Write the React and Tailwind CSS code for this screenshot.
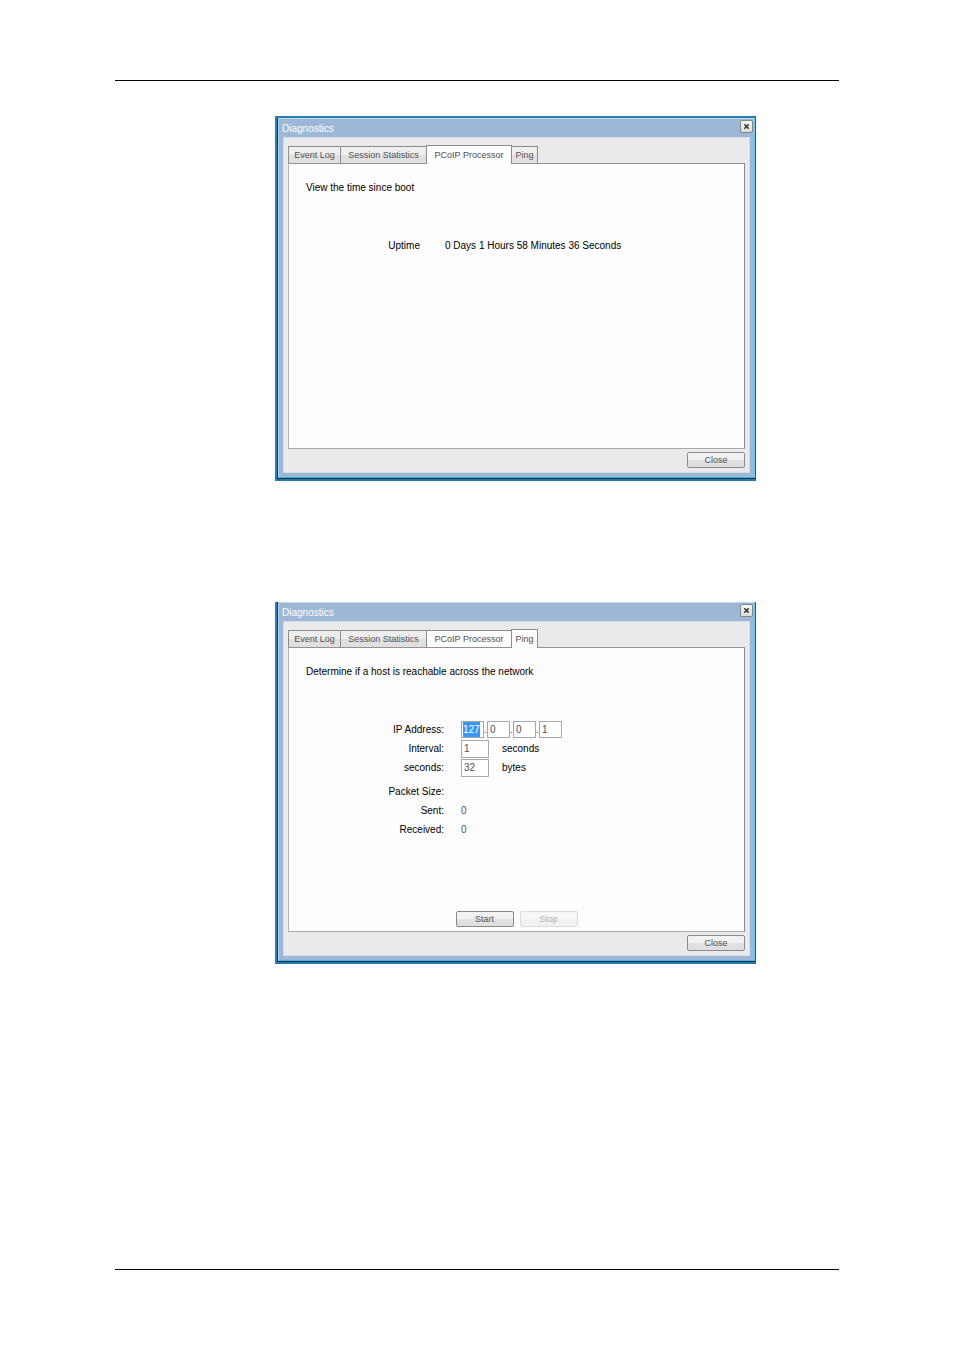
import React from 'react';

const TABS = ['Event Log', 'Session Statistics', 'PCoIP Processor', 'Ping'];
const TAB_WIDTHS = ['w-[53px]', 'w-[87px]', 'w-[86px]', 'w-[27px]'];

function Tabs({ active, plain = [] }) {
  return (
    <div role="tablist" className="flex h-[18px] items-end">
      {TABS.map((name, i) => {
        const on = name === active;
        const look = on
          ? 'relative z-10 h-[19px] bg-[#fdfdfd] border-b-0 -mb-px'
          : plain.includes(name)
            ? 'h-[17px] bg-[#fdfdfd] border-b-0'
            : 'h-[17px] bg-linear-to-b from-[#eeeeee] from-50% to-[#e0e0e0] to-50% border-b-0';
        return (
          <button
            key={name}
            type="button"
            role="tab"
            aria-selected={on}
            className={`${look} ${TAB_WIDTHS[i]} ${i ? '-ml-px' : ''} shrink-0 border border-[#8c8c8c] text-center text-[9px] leading-4 whitespace-nowrap text-[#505050]`}
          >
            {name}
          </button>
        );
      })}
    </div>
  );
}

function Button({ children, disabled }) {
  return (
    <button
      type="button"
      disabled={disabled}
      className="h-4 w-[58px] rounded-[2px] border border-[#8a8a8a] bg-linear-to-b from-[#f2f2f2] from-50% to-[#e0e0e0] to-50% text-center text-[9px] leading-[14px] text-[#505050] disabled:border-[#dcdcdc] disabled:from-[#f7f7f7] disabled:to-[#f2f2f2] disabled:text-[#b0b0b0]"
    >
      {children}
    </button>
  );
}

function Dialog({ frame, active, plain, panel, children }) {
  return (
    <section
      role="dialog"
      aria-label="Diagnostics"
      className={`${frame} mr-[83px] ml-[160px] border-r border-b-2 border-l-2 border-r-[#14688c] border-b-[#2778ad] border-l-[#2380b8]`}
    >
      <div className="border-b border-l border-[#10304c]">
        <div className="border border-t-[#c3d6ea] border-r-[#62c8ec] border-b-[#45b4dc] border-l-[#b5d4ea] bg-[#9db8d6] px-1 pb-1">
          <header className="-mx-1 flex h-[18px] items-start justify-between pr-px pl-[3px]">
            <h2 className="pt-px text-[10px] leading-[18px] text-white">Diagnostics</h2>
            <button
              type="button"
              aria-label="Close window"
              className="mt-px flex h-[13px] w-[13px] items-center justify-center rounded-[2px] border border-[#858585] bg-linear-to-b from-[#f6f6f6] to-[#dcdcdc]"
            >
              <svg width="5" height="5" viewBox="0 0 5 5" className="stroke-[#303030]" aria-hidden="true">
                <path d="M0.3 0.3 4.7 4.7M4.7 0.3 0.3 4.7" strokeWidth="1.5" />
              </svg>
            </button>
          </header>
          <div className="border border-[#d3deea] bg-[#eaeaea] px-1 pt-[7px]">
            <Tabs active={active} plain={plain} />
            <div
              role="tabpanel"
              className={`${panel} flex flex-col border border-t-[#929292] border-r-[#888888] border-b-[#aaaaaa] border-l-[#b4b4b4] bg-[#fdfdfd]`}
            >
              {children}
            </div>
            <footer className="flex h-[23px] items-start justify-end pt-[3px]">
              <Button>Close</Button>
            </footer>
          </div>
        </div>
      </div>
    </section>
  );
}

const BOX = 'border border-[#a8a8a8] bg-white px-0.5 text-[#505050] outline-none';
const LABEL = 'mr-[17px] w-[155px] text-right';

function Field({ label, id, value, unit }) {
  return (
    <div className="flex h-[19px] items-center">
      <label htmlFor={id} className={LABEL}>{label}</label>
      <input id={id} type="text" defaultValue={value} className={`${BOX} h-[18px] w-[28px]`} />
      <span className="ml-[13px]">{unit}</span>
    </div>
  );
}

function Reading({ label, value }) {
  return (
    <div className="flex h-[19px] items-center">
      <span className={LABEL}>{label}</span>
      <output className="text-[#505050]">{value}</output>
    </div>
  );
}

function IpAddress() {
  return (
    <div className="flex h-[19px] items-center">
      <label htmlFor="ip-0" className={LABEL}>IP Address:</label>
      <div className="flex items-center">
        {['127', '0', '0', '1'].map((part, i) => (
          <React.Fragment key={i}>
            {i > 0 && <span className="w-[3px] text-[#505050]">.</span>}
            <input
              id={`ip-${i}`}
              aria-label={i ? `IP Address part ${i + 1}` : undefined}
              type="text"
              defaultValue={part}
              className={
                i === 0
                  ? 'h-[17px] w-[23px] border border-[#a8a8a8] bg-[#3399ff] bg-clip-content py-0 pr-[3px] pl-px text-white outline-none'
                  : `${BOX} h-[17px] w-[23px]`
              }
            />
          </React.Fragment>
        ))}
      </div>
    </div>
  );
}

export default function App() {
  return (
    <main className="flex min-h-screen flex-col bg-white px-[115px] pt-20 pb-20 font-['Liberation_Sans',Arial,sans-serif] text-[10px] leading-4 text-black">
      <hr className="border-t border-black" />

      <Dialog
        frame="mt-[35px] border-t-2 border-t-[#2380b8]"
        active="PCoIP Processor"
        panel="min-h-[286px]"
      >
        <p className="pt-4 pl-[17px]">View the time since boot</p>
        <dl className="mt-[42px] flex">
          <dt className="mr-[25px] w-[131px] text-right">Uptime</dt>
          <dd>0 Days 1 Hours 58 Minutes 36 Seconds</dd>
        </dl>
      </Dialog>

      <Dialog
        frame="mt-[121px]"
        active="Ping"
        plain={['PCoIP Processor']}
        panel="min-h-[285px]"
      >
        <p className="pt-4 pl-[17px]">Determine if a host is reachable across the network</p>
        <form className="mt-10 flex grow flex-col" onSubmit={(e) => e.preventDefault()}>
          <IpAddress />
          <Field label="Interval:" id="interval" value="1" unit="seconds" />
          <Field label="seconds:" id="packet" value="32" unit="bytes" />
          <div className="mt-[5px]">
            <Reading label="Packet Size:" value="" />
            <Reading label="Sent:" value="0" />
            <Reading label="Received:" value="0" />
          </div>
          <div className="mt-auto mb-1 flex justify-center gap-[6px]">
            <Button>Start</Button>
            <Button disabled>Stop</Button>
          </div>
        </form>
      </Dialog>

      <hr className="mt-auto border-t border-black" />
    </main>
  );
}
